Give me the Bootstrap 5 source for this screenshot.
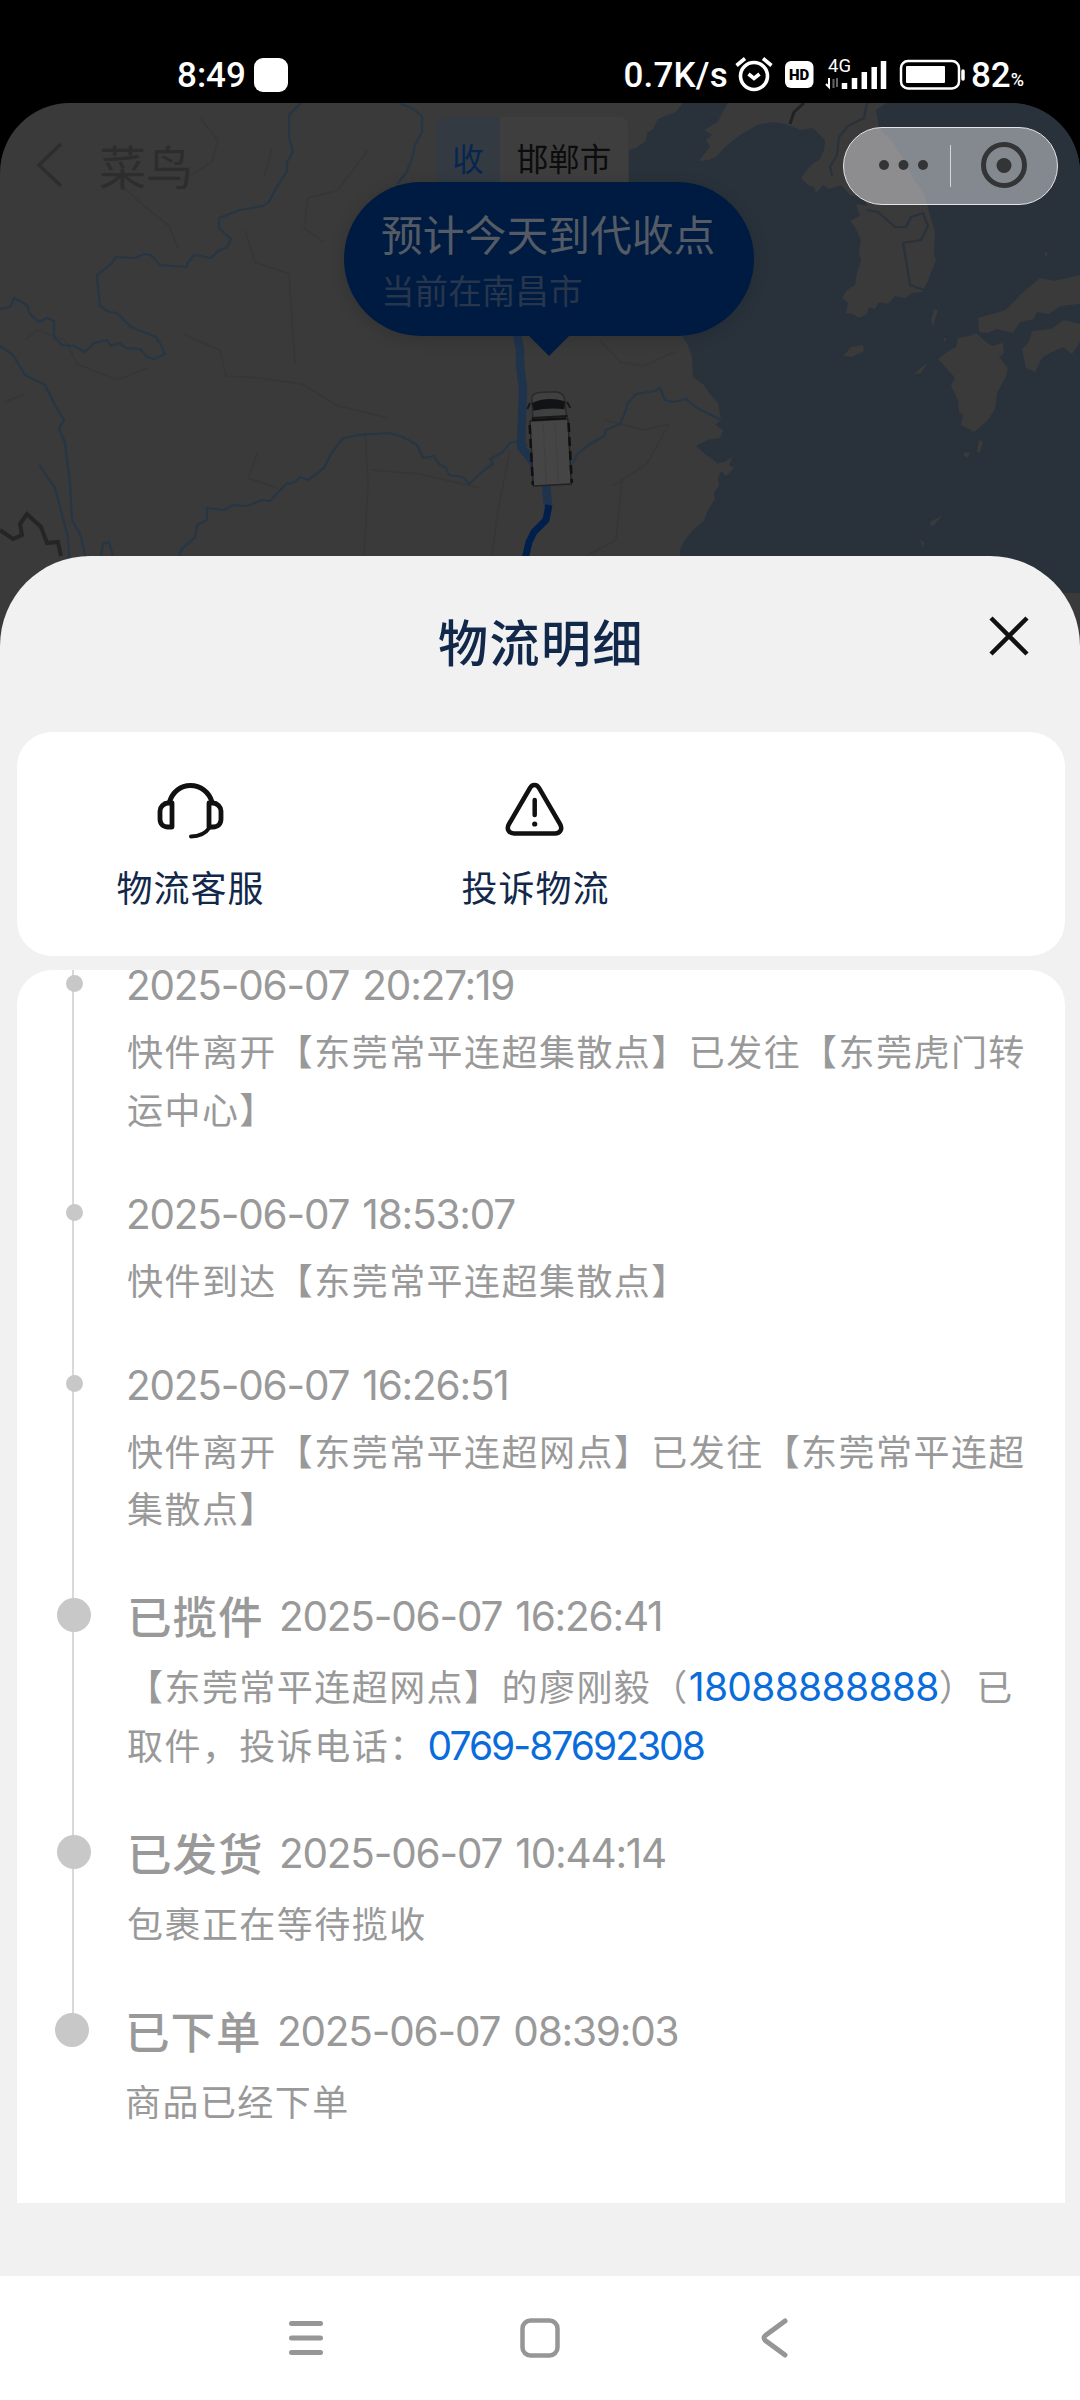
<!DOCTYPE html>
<html lang="zh-CN">
<head>
  <meta charset="UTF-8">
  <meta name="viewport" content="width=device-width, initial-scale=1">
  <title>物流明细</title>
  <link rel="stylesheet" href="https://cdn.jsdelivr.net/npm/bootstrap@5.3.3/dist/css/bootstrap.min.css">
  <style>
    body { width: 1080px; height: 2400px; background: #000; font-family: "Noto Sans CJK SC", sans-serif; overflow: hidden; }
    svg { display: block; }

    .status-bar { height: 103px; padding: 51px 56px 0 177px; font: 500 35px/50px Roboto, sans-serif; color: #fff; }
    .status-app { width: 34px; height: 34px; border-radius: 9px; background: #fff; margin: 7px 0 0 8px; }
    .status-speed { letter-spacing: .2px; margin-right: 7px; }
    .status-pct { font-size: 18px; line-height: 20px; padding-top: 19px; }

    .map-area { height: 453px; }
    .map-canvas { position: absolute; left: 0; top: 0; border-radius: 70px 70px 0 0; }
    .map-head { height: 124px; padding-left: 35px; color: #2d2d2e; font-size: 47px; line-height: 56px; }
    .map-head span { margin-left: 34px; }
    .city-tag { left: 436px; top: 14px; height: 80px; font-size: 31.5px; line-height: 80px; color: #0c0c0d; background: #3e3e3f; border-radius: 8px; }
    .city-tag b { width: 64px; font-weight: 400; color: #07264f; background: #343a42; border-radius: 8px 0 0 8px; text-align: center; }
    .city-tag span { width: 128px; text-align: center; }
    .tip-bubble { left: 344px; top: 79px; width: 410px; height: 154px; border-radius: 77px; padding: 21px 0 0 37px; background: #001b41; box-shadow: 0 3px 16px rgba(0,0,0,.15); }
    .tip-bubble::after { content: ""; position: absolute; left: 184px; top: 153px; border: 21px solid transparent; border-top-color: #001b41; border-bottom: 0; }
    .tip-title { font-size: 41.8px; line-height: 60px; color: #555b64; }
    .tip-sub { font-size: 33.6px; line-height: 54px; color: #27364c; }
    .capsule { left: 843px; top: 24px; width: 215px; height: 78px; border-radius: 39px; border: 1px solid #e5e5e7; background: rgba(224,224,228,.5); }

    .sheet { z-index: 2; height: 1720px; background: #f1f1f1; border-radius: 90px 90px 0 0; padding: 0 15px 0 17px; }
    .sheet-head { height: 176px; padding-bottom: 8px; color: #12284a; font-size: 50px; font-weight: 500; letter-spacing: 1.5px; }
    .sheet-close { right: 51px; top: 60px; }
    .panel { background: #fff; border-radius: 35px; }
    .service { height: 224px; padding-top: 46px; margin-bottom: 14px; }
    .service-item { width: 345px; font-size: 36px; line-height: 52px; letter-spacing: 1px; color: #12284a; }
    .service-item svg { margin-bottom: 18px; }
    .service-item span { padding-left: 2px; }

    .track { height: 1233px; border-radius: 35px 35px 0 0; overflow: hidden; color: #999; }
    .track ul { margin-top: -13px; }
    .track li { position: relative; padding: 0 0 48.5px 110px; font-size: 36px; line-height: 57.5px; letter-spacing: 1.45px; white-space: nowrap; }
    .track li::before { content: ""; position: absolute; left: 55px; top: 0; bottom: 0; width: 2px; background: #d9d9d9; }
    .track li:last-child::before { bottom: auto; height: 30px; }
    .track li::after { content: ""; position: absolute; left: 49px; top: 18px; width: 17px; height: 17px; border-radius: 50%; background: #c8c8c8; }
    .track li.stage { padding-bottom: 48px; }
    .track li.stage::after { left: 40px; top: 13px; width: 34px; height: 34px; }
    .track li.stage:last-child { padding-left: 108px; }
    .track li.stage:last-child::after { left: 38px; }
    .when { font: 400 40.5px/57px Inter, sans-serif; letter-spacing: -1.2px; word-spacing: 3px; margin: 0 0 8px -1px; }
    .stage .when { line-height: 64px; margin-bottom: 8px; }
    .when b { font: 500 44.5px/60px "Noto Sans CJK SC", sans-serif; letter-spacing: 1px; width: 152px; margin-left: 1px; }
    .track a { font-family: Inter, sans-serif; font-size: 39px; letter-spacing: -.7px; color: #0a6cdb; text-decoration: none; }
    .track a.landline { letter-spacing: -2px; margin-left: 1px; }

    .sys-nav { height: 124px; background: #fff; }
  </style>
</head>
<body class="d-flex flex-column">

  <header class="status-bar d-flex flex-shrink-0 align-items-start">
    <span>8:49</span>
    <span class="status-app"></span>
    <span class="status-speed ms-auto">0.7K/s</span>
    <svg width="236" height="40" viewBox="734 55 236 40" class="mt-1" fill="none" stroke="#fff">
      <!-- alarm -->
      <circle cx="753" cy="76" r="13.5" stroke-width="3.6"/>
      <path d="M747.500 74l5.500 4.500 5.500-4.500M735.500 65.500l8.500-7M770.500 65.500l-8.500-7" stroke-width="3.6"/>
      <!-- HD -->
      <rect x="784" y="61" width="28.500" height="27" rx="6" fill="#fff" stroke="none"/>
      <text x="798.200" y="80" font-family="Roboto" font-weight="900" font-size="15" text-anchor="middle" fill="#000" stroke="none">HD</text>
      <!-- signal -->
      <text x="827" y="72" font-family="Roboto" font-weight="400" font-size="18.500" fill="#fff" stroke="none">4G</text>
      <path d="M828 78v9l-3-3" stroke-width="2"/>
      <path d="M832.500 88v-9M836 78v9" stroke="#666" stroke-width="2"/>
      <path d="M843.500 89v-6M853.500 89v-11M863.300 89v-17M873.200 89v-22M882.500 89v-28" stroke-width="5.500"/>
      <!-- battery -->
      <rect x="900" y="61" width="58" height="27.500" rx="7" stroke-width="2.500"/>
      <rect x="905" y="66" width="39" height="17" rx="1" fill="#fff" stroke="none"/>
      <path d="M962 71v8" stroke-width="3.500" stroke-linecap="round"/>
    </svg>
    <span>82</span><span class="status-pct">%</span>
  </header>

  <section class="map-area position-relative flex-shrink-0">
    <svg class="map-canvas" width="1080" height="560" viewBox="0 103 1080 560">
      <rect y="103" width="1080" height="560" fill="#3a3a3b"/>
      <path fill="#29323b" d="M683 103l-7 9-8 3-10 4-5 10-6 4-1 8-10 7-7 2v186h53l6 9 4 12 1 20 11 8 5 8 9 10 3 17-6 5 8 5-3 8-13 2-11 6 10 9 9 6 7 8-4 9 1 7-5 8 1 6-8 13-3 9-10 8-10 12-4 9v43H1080V103z"/>
      <!-- Liaodong and the Korean peninsula -->
      <path fill="#3a3a3b" d="M728 103l-6 10-4 9-14 8 8 5-6 5 4 7-11 14 9-1 8-3 8-9 16-13 17-10 15-3 14 2 14 6 13-2 12 12-1 10-4 9-10 7-9 12 7 7 6 2 2 6 7-8 6 4 12-4 9 10 14 3 4 8-12-2 4 12-10 5 5 6 6 13-2 12 2 9-4 11-2 13-8 5-5 8 6 5-2 10 7 1 6 4 8-4 2-7 6 2 4-7 9 2 7-8 10 2 7-5 10-1 6-11 3-9 5-11-2-7 1-22-5-17-5-19-12-18-10-20-10-15-14-15-3-18 18-12 15-10V103z"/>
      <!-- Japan and small islands -->
      <path fill="#3a3a3b" d="M1080 275l-26 6-14-3-20 17-14 15-21 6-7 2 1 14 8 1 10-4 16 4 7-11 14-3 3-7 12 2 11-8 20-2zM1080 324l-16-4-13 9-19 2-3 11-7 7 4 19 9 4 7-14 8-5 13-6 9 7 8-12zM976 333l10 9 6 4 11-3 1 10-5 4 9 11-2 8-9 17-2 16-8 12-13 11-13-7 2-10-4-3-1-12-7-14 4-8-13-15-4-4 12-9 6-3 2-9 12-2zM843 356l8-9 12-2 1 6-12 6zM931 320l3-11 4 1-5 16zM914 374l13-11-6 10zM944 338l3 1-3 3zM977 452l2-12 4 2-3 11zM964 452l6 1-2 5-4-2zM930 522l13-7-8 9-4 3zM920 540l4 2-1 6zM1044 252l4 1-2 4zM718 463l7-1 8-6-4 9 5 3-8 8-7-7z"/>
      <!-- province borders -->
      <g fill="none" stroke="#363637" stroke-width="1.500" stroke-linejoin="round">
        <path d="M200 118l18 22-6 22-30 18M118 182l26 24 25 20 9 22M272 148l-8 30M368 150l-30 40 -30 8-4 30 20 14M245 230l10 32 34 12 6 90M185 335l35 15 6 26 34 2 42 6 36 22 50 12M5 402l20-8M25 340l12-10 28 10 12 24 40 16 30-12M258 452l-10 26 30 10M365 430l3 54-4 72M370 470l50 4 60 14M600 340l20 22 24 4 30-14M605 420l40 10 24-6-22 40-34 22M510 450l-12 60-6 46M622 480l-6 60-30 16"/>
      </g>
      <!-- rivers -->
      <g fill="none" stroke="#263644" stroke-width="2.200" stroke-linejoin="round" stroke-linecap="round">
        <path d="M301 103l-12 12v23l4 14-6 10v9l-12 19-6 12-6 4-23 4-21 8v10l12 11-4 8-9 4-7 7-17-3-7 9v3l-27-2-9-10-7-1-9 4-19-1-5 7-14 11 1 13 2 18 9 6 8 1 14 14 25 10 6 10 3 7-11 5-7-2-7-8-14-1-7-5-8 3-4-6-13 3-9 9-11-6-12-1-8-8v-16l-7-3-8 4-9-8-3-9-13-7-4 9-8 2-12-6"/>
        <path d="M400 104l12 4 10 8 0 16-7 13-3 14-6 14-8 10"/>
        <path d="M0 346l13 9 12 20 20 10 9 18 10 17-5 8 6 15 5 40 2 37 9 16 4 20M40 466l15 22 5 19 8 30 1 20M101 556l2-12 6-2 4 14"/>
        <path d="M179 556l3-7 13-12 2-12 10-5v-12l17 2 9-5 14 1 15-6 8 1 16-17 9-2 5-5 8 3 16-12 7-14 12-16 16-3 30-2 14 4 14 8 6 13 11-2 5 8 7 4 3 7 14 2 6 7 14-13 10-7-3-5 12-6 8-10 9-2 8 4M573 463l4-9 12-9 15-9 2-6 14-6 5-12 3-9 8-9 19-3 5-3 5 12 8 2 13-3 11 9 24 12"/>
        <path d="M867 103l-3 15-16 8-9 11-2 18-7 12 2 8M868 210l10 2 17 15h11l5-10 12-4 5 13-7 14-18 3 3 17 4 25 14 5 3 8" stroke="#29323b"/>
      </g>
      <path d="M0 530l13 9 9-4-2-11 7-10 14 13 6 16 11-1 3 14" fill="none" stroke="#252525" stroke-width="4"/>
      <path d="M804 103l-10 9-4 12" fill="none" stroke="#222" stroke-width="3"/>
      <!-- route -->
      <g fill="none" stroke-width="8.500" stroke-linejoin="round">
        <path d="M515 325l5 25 0 14 3 25-2 58 10 12 15 25 2 22" stroke="#1f334d"/>
        <path d="M549 505l-3 15-12 12-5 10-5 21" stroke="#001f4d" stroke-width="7"/>
      </g>
      <!-- truck, seen from above -->
      <g transform="rotate(-3 550 440)">
        <path d="M534 400q-1-7 7-8h17q8 1 9 9l1 24h-34z" fill="#404041" stroke="#2a2a2b" stroke-width="1.500"/>
        <path d="M534 402q15-6 33 0l-1 8q-15-3-31 0z" fill="#111314"/>
        <path d="M532 402l-3 6M569 403l3 6M533 417h36" stroke="#171819" stroke-width="2"/>
        <rect x="531" y="420" width="38" height="65" fill="#454545" stroke="#222" stroke-width="1.500"/>
        <path d="M530.500 424v60M569.500 424v60" stroke="#0f1012" stroke-width="2.500" stroke-dasharray="9 5"/>
        <path d="M533 419h34" stroke="#111" stroke-width="2"/>
        <path d="M544 423v60M556 423v60" stroke="#404041"/>
      </g>
    </svg>

    <div class="map-head position-relative d-flex align-items-center">
      <svg width="30" height="46" viewBox="0 0 30 46" fill="none" stroke="#2d2d2e" stroke-width="3.500"><path d="M26 2L4 23l22 21"/></svg>
      <span>菜鸟</span>
    </div>
    <div class="city-tag position-absolute d-flex"><b>收</b><span>邯郸市</span></div>
    <div class="tip-bubble position-absolute">
      <div class="tip-title">预计今天到代收点</div>
      <div class="tip-sub">当前在南昌市</div>
    </div>
    <div class="capsule position-absolute">
      <svg width="213" height="76" viewBox="844 128 213 76">
        <g fill="#333436"><circle cx="884" cy="165" r="5"/><circle cx="903.500" cy="165" r="5"/><circle cx="923" cy="165" r="5"/><circle cx="1004" cy="165.500" r="7.500"/></g>
        <circle cx="1004" cy="165" r="20.500" fill="none" stroke="#333436" stroke-width="5"/>
        <path d="M950.500 145v42" stroke="#d4d5d8"/>
      </svg>
    </div>
  </section>

  <main class="sheet position-relative flex-shrink-0">
    <div class="sheet-head d-flex align-items-center justify-content-center">物流明细</div>
    <svg class="sheet-close position-absolute" width="40" height="40" viewBox="0 0 40 40" stroke="#111" stroke-width="4.500"><path d="M2 2l36 36M38 2L2 38"/></svg>

    <div class="panel service d-flex">
      <div class="service-item d-flex flex-column align-items-center">
        <svg width="70" height="64" viewBox="155 778 70 64" fill="none" stroke="#111" stroke-linejoin="round" stroke-linecap="round">
          <path d="M169.500 802c3-10 11-16.500 21-16.500s18.500 6.500 21.500 16.500" stroke-width="5"/>
          <path d="M172 803v24h-4c-5 0-8-3-8-8v-8c0-4 4-8 8-8zM209 803v24h4c5 0 8-3 8-8v-8c0-4-4-8-8-8z" stroke-width="4.800"/>
          <path d="M210 827c-4 6-10 9.500-19 9.500" stroke-width="4"/>
        </svg>
        <span>物流客服</span>
      </div>
      <div class="service-item d-flex flex-column align-items-center">
        <svg width="70" height="64" viewBox="500 778 70 64" fill="none" stroke="#111" stroke-linecap="round">
          <path d="M530 788l-21 36c-3 5 0 9.500 5 9.500h41c5 0 8-4.500 5-9.500l-21-36c-2-4-7-4-9 0z" stroke-width="4.500"/>
          <path d="M534.700 800v15" stroke-width="4.500"/><circle cx="534.700" cy="824" r="2.600" fill="#111" stroke="none"/>
        </svg>
        <span>投诉物流</span>
      </div>
    </div>

    <div class="panel track">
      <ul class="list-unstyled mb-0">
        <li>
          <div class="when">2025-06-07 20:27:19</div>
          快件离开【东莞常平连超集散点】已发往【东莞虎门转<br>运中心】
        </li>
        <li>
          <div class="when">2025-06-07 18:53:07</div>
          快件到达【东莞常平连超集散点】
        </li>
        <li>
          <div class="when">2025-06-07 16:26:51</div>
          快件离开【东莞常平连超网点】已发往【东莞常平连超<br>集散点】
        </li>
        <li class="stage">
          <div class="when d-flex"><b>已揽件</b>2025-06-07 16:26:41</div>
          【东莞常平连超网点】的廖刚毅（<a href="tel:18088888888">18088888888</a>）已<br>取件，投诉电话：<a class="landline" href="tel:0769-87692308">0769-87692308</a>
        </li>
        <li class="stage">
          <div class="when d-flex"><b>已发货</b>2025-06-07 10:44:14</div>
          包裹正在等待揽收
        </li>
        <li class="stage">
          <div class="when d-flex"><b>已下单</b>2025-06-07 08:39:03</div>
          商品已经下单
        </li>
      </ul>
    </div>
  </main>

  <footer class="sys-nav flex-shrink-0">
    <svg width="1080" height="124" viewBox="0 2276 1080 124" fill="none" stroke="#969696" stroke-width="5" stroke-linecap="round">
      <path d="M291.500 2323.500h29M291.500 2338h29M291.500 2352.500h29"/>
      <rect x="522.500" y="2320.500" width="35" height="35" rx="8" stroke-width="4.500"/>
      <path d="M785 2321l-19 14q-4 3 0 6l19 14"/>
    </svg>
  </footer>

  <script src="https://cdn.jsdelivr.net/npm/bootstrap@5.3.3/dist/js/bootstrap.bundle.min.js"></script>
</body>
</html>
